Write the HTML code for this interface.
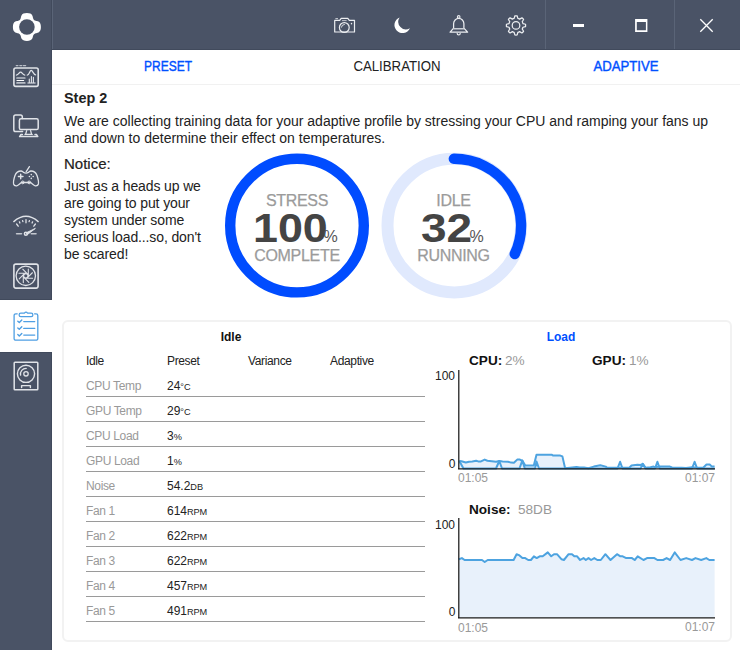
<!DOCTYPE html>
<html><head><meta charset="utf-8">
<style>
*{margin:0;padding:0;box-sizing:border-box}
html,body{width:740px;height:650px;overflow:hidden;background:#fff}
body{position:relative;font-family:"Liberation Sans",sans-serif;color:#222}
.a{position:absolute;white-space:nowrap}
#side{position:absolute;left:0;top:0;width:52px;height:650px;background:#4a5366;border-right:1px solid #414a5c}
#top{position:absolute;left:52px;top:0;width:688px;height:50px;background:#4a5366;border-bottom:1px solid #414a5c}
.sep{position:absolute;top:0;width:1px;height:49px;background:#5a6477}
#act{position:absolute;left:0;top:299px;width:52px;height:54px;background:#fff;border-top:1px solid #414a5c;border-bottom:1px solid #414a5c}
.tab{position:absolute;top:57px;font-size:14px;line-height:18px;white-space:nowrap}
.rt{width:140px;text-align:center;font-size:16px;letter-spacing:-0.3px;line-height:20px;color:#9b9b9b;-webkit-text-stroke:0.25px #9b9b9b}
.rn{font-size:40px;line-height:40px;font-weight:bold;color:#444}
.tb{font-size:12px;line-height:16px;font-weight:bold;color:#111}
.td{font-size:12px;line-height:16px;color:#222;letter-spacing:-0.35px}
.u{font-size:9.2px;letter-spacing:-0.1px}
.ch{font-size:13.6px;line-height:18px;color:#111}
.ax{font-size:12px;line-height:16px;color:#222}
.pc{font-size:16px;font-weight:normal;color:#555;letter-spacing:0}
.g{color:#999}
.blue{color:#0050ff}
</style></head><body>
<div id="side"></div>
<div id="top"></div>
<div id="act"></div>
<div class="sep" style="left:52px"></div>
<div class="sep" style="left:545px"></div>
<div class="sep" style="left:674px"></div>

<!-- tabs -->
<div class="tab blue" style="left:168.2px;transform:translateX(-50%) scaleX(0.855);-webkit-text-stroke:0.4px #0050ff">PRESET</div>
<div class="tab" style="left:397px;transform:translateX(-50%) scaleX(0.945)">CALIBRATION</div>
<div class="tab blue" style="left:626px;transform:translateX(-50%) scaleX(0.94);-webkit-text-stroke:0.4px #0050ff">ADAPTIVE</div>
<div class="a" style="left:52px;top:84px;width:688px;height:1px;background:#f1f1f1"></div>

<div class="a" style="left:64px;top:88.7px;font-size:14.4px;font-weight:bold;line-height:18px">Step 2</div>
<div class="a" style="left:64px;top:112.5px;font-size:14px;line-height:17px;white-space:normal;width:660px">We are collecting training data for your adaptive profile by stressing your CPU and ramping your fans up and down to determine their effect on temperatures.</div>
<div class="a" style="left:64px;top:155px;font-size:15px;line-height:18px;-webkit-text-stroke:0.2px #222">Notice:</div>
<div class="a" style="left:64px;top:178px;font-size:14px;line-height:17px;letter-spacing:-0.12px;white-space:normal;width:150px">Just as a heads up we<br>are going to put your<br>system under some<br>serious load...so, don't<br>be scared!</div>


<svg class="a" style="left:0;top:0" width="740" height="650">
<circle cx="297" cy="225.6" r="66.8" fill="none" stroke="#004cff" stroke-width="10.4"/>
<circle cx="454.3" cy="225.6" r="66.8" fill="none" stroke="#e0e9fd" stroke-width="12"/>
<path d="M453.8 158.8 A66.8 66.8 0 0 1 514.74 254.04" fill="none" stroke="#004cff" stroke-width="10.4" stroke-linecap="round"/>
</svg>
<div class="a rt" style="left:227px;top:190.6px">STRESS</div>
<div class="a rn" style="left:253px;top:208px;letter-spacing:0;transform:scaleX(1.12);transform-origin:0 0">100</div><div class="a pc" style="left:323.5px;top:227px;line-height:20px">%</div>
<div class="a rt" style="left:227px;top:246.4px">COMPLETE</div>
<div class="a rt" style="left:383.5px;top:190.6px">IDLE</div>
<div class="a rn" style="left:421px;top:208px;letter-spacing:0;transform:scaleX(1.15);transform-origin:0 0">32</div><div class="a pc" style="left:469.5px;top:227px;line-height:20px">%</div>
<div class="a rt" style="left:383.5px;top:246.4px">RUNNING</div>

<div class="a" style="left:62px;top:320px;width:670px;height:322px;border:2px solid #f2f2f2;border-radius:6px"></div>
<div class="a tb" style="left:191px;top:329px;width:80px;text-align:center">Idle</div>
<div class="a tb blue" style="left:521px;top:329px;width:80px;text-align:center">Load</div>
<div class="a td" style="left:86px;top:353px">Idle</div>
<div class="a td" style="left:167px;top:353px">Preset</div>
<div class="a td" style="left:248px;top:353px">Variance</div>
<div class="a td" style="left:330px;top:353px">Adaptive</div>
<div class="a td g" style="left:86px;top:378px">CPU Temp</div>
<div class="a td" style="left:167px;top:378px;font-size:12px;letter-spacing:0">24<span class="u" style="letter-spacing:-0.1px">°C</span></div>
<div class="a" style="left:86px;top:396px;width:339px;height:1px;background:#9a9a9a"></div>
<div class="a td g" style="left:86px;top:403px">GPU Temp</div>
<div class="a td" style="left:167px;top:403px;font-size:12px;letter-spacing:0">29<span class="u" style="letter-spacing:-0.1px">°C</span></div>
<div class="a" style="left:86px;top:421px;width:339px;height:1px;background:#9a9a9a"></div>
<div class="a td g" style="left:86px;top:428px">CPU Load</div>
<div class="a td" style="left:167px;top:428px;font-size:12px;letter-spacing:0">3<span class="u" style="letter-spacing:-0.1px">%</span></div>
<div class="a" style="left:86px;top:446px;width:339px;height:1px;background:#9a9a9a"></div>
<div class="a td g" style="left:86px;top:453px">GPU Load</div>
<div class="a td" style="left:167px;top:453px;font-size:12px;letter-spacing:0">1<span class="u" style="letter-spacing:-0.1px">%</span></div>
<div class="a" style="left:86px;top:471px;width:339px;height:1px;background:#9a9a9a"></div>
<div class="a td g" style="left:86px;top:478px">Noise</div>
<div class="a td" style="left:167px;top:478px;font-size:12px;letter-spacing:0">54.2<span class="u" style="letter-spacing:-0.1px">DB</span></div>
<div class="a" style="left:86px;top:496px;width:339px;height:1px;background:#9a9a9a"></div>
<div class="a td g" style="left:86px;top:503px">Fan 1</div>
<div class="a td" style="left:167px;top:503px;font-size:12px;letter-spacing:0">614<span class="u" style="letter-spacing:-0.1px">RPM</span></div>
<div class="a" style="left:86px;top:521px;width:339px;height:1px;background:#9a9a9a"></div>
<div class="a td g" style="left:86px;top:528px">Fan 2</div>
<div class="a td" style="left:167px;top:528px;font-size:12px;letter-spacing:0">622<span class="u" style="letter-spacing:-0.1px">RPM</span></div>
<div class="a" style="left:86px;top:546px;width:339px;height:1px;background:#9a9a9a"></div>
<div class="a td g" style="left:86px;top:553px">Fan 3</div>
<div class="a td" style="left:167px;top:553px;font-size:12px;letter-spacing:0">622<span class="u" style="letter-spacing:-0.1px">RPM</span></div>
<div class="a" style="left:86px;top:571px;width:339px;height:1px;background:#9a9a9a"></div>
<div class="a td g" style="left:86px;top:578px">Fan 4</div>
<div class="a td" style="left:167px;top:578px;font-size:12px;letter-spacing:0">457<span class="u" style="letter-spacing:-0.1px">RPM</span></div>
<div class="a" style="left:86px;top:596px;width:339px;height:1px;background:#9a9a9a"></div>
<div class="a td g" style="left:86px;top:603px">Fan 5</div>
<div class="a td" style="left:167px;top:603px;font-size:12px;letter-spacing:0">491<span class="u" style="letter-spacing:-0.1px">RPM</span></div>
<div class="a" style="left:86px;top:621px;width:339px;height:1px;background:#9a9a9a"></div>

<svg class="a" style="left:0;top:0" width="740" height="650">
<polygon points="459.3,461.0 461.5,461.2 465.8,462.5 469.0,461.8 472.3,461.4 476.1,460.7 478.2,461.4 481.0,461.4 484.7,459.6 487.4,460.7 491.8,461.2 496.1,461.8 499.3,461.0 502.6,461.4 508.0,461.8 511.2,462.6 513.9,462.8 517.2,459.6 519.9,459.6 522.6,461.0 525.3,465.5 533.8,465.5 536.5,454.7 551.6,454.7 553.2,455.6 560.3,455.6 562.4,456.4 565.1,468.2 570.0,467.7 576.5,467.0 579.7,467.5 584.0,467.5 588.4,468.2 593.8,466.6 600.3,465.3 605.7,466.6 607.2,467.7 618.0,467.7 622.3,467.7 629.3,467.7 631.5,465.5 637.4,464.7 640.7,465.0 642.8,463.9 645.5,467.7 650.4,467.2 653.6,466.6 655.3,467.2 659.6,466.6 669.9,466.6 672.0,467.5 681.6,467.7 686.0,468.0 692.4,467.2 697.3,467.7 703.2,467.7 706.5,464.5 709.7,464.5 711.9,466.6 714.6,466.6 714.6,468.5 459.3,468.5" fill="#e8f1fb"/>
<polyline points="459.3,461.0 461.5,461.2 465.8,462.5 469.0,461.8 472.3,461.4 476.1,460.7 478.2,461.4 481.0,461.4 484.7,459.6 487.4,460.7 491.8,461.2 496.1,461.8 499.3,461.0 502.6,461.4 508.0,461.8 511.2,462.6 513.9,462.8 517.2,459.6 519.9,459.6 522.6,461.0 525.3,465.5 533.8,465.5 536.5,454.7 551.6,454.7 553.2,455.6 560.3,455.6 562.4,456.4 565.1,468.2 570.0,467.7 576.5,467.0 579.7,467.5 584.0,467.5 588.4,468.2 593.8,466.6 600.3,465.3 605.7,466.6 607.2,467.7 618.0,467.7 622.3,467.7 629.3,467.7 631.5,465.5 637.4,464.7 640.7,465.0 642.8,463.9 645.5,467.7 650.4,467.2 653.6,466.6 655.3,467.2 659.6,466.6 669.9,466.6 672.0,467.5 681.6,467.7 686.0,468.0 692.4,467.2 697.3,467.7 703.2,467.7 706.5,464.5 709.7,464.5 711.9,466.6 714.6,466.6" fill="none" stroke="#4da3e0" stroke-width="2" stroke-linejoin="round"/>
<polyline points="459.3,461.0 463.5,468.5 496.0,468.5 499.3,461.0 502.0,468.5 519.5,468.5 522.3,460.5 524.8,468.5 535.0,468.5 536.5,461.5 539.0,468.5 617.5,468.5 620.1,461.8 622.5,468.5 640.5,468.5 642.8,463.9 645.5,468.5 655.0,468.5 657.4,461.8 659.8,468.5 692.0,468.5 694.6,461.8 697.2,468.5 714.6,468.5" fill="none" stroke="#4da3e0" stroke-width="2" stroke-linejoin="round"/>
<polygon points="458.9,559.3 461.9,558.1 464.6,560.0 482.0,560.0 484.7,562.0 487.7,560.0 513.6,560.0 516.6,554.2 518.9,555.1 522.4,558.1 525.2,558.1 528.2,560.0 530.9,560.0 533.9,556.3 536.7,558.1 539.7,556.3 542.7,556.3 547.8,552.4 551.2,556.3 554.0,554.2 557.0,554.2 561.6,559.3 563.9,560.0 568.6,554.2 572.0,554.2 574.3,556.3 577.1,556.3 580.1,560.0 583.5,558.1 585.8,560.0 588.5,558.1 591.1,560.0 594.3,558.1 597.3,560.0 600.8,560.0 605.4,554.2 610.5,560.0 617.0,554.2 620.4,556.3 622.7,556.3 626.2,558.1 632.0,558.1 634.7,560.0 637.7,556.3 643.5,560.0 647.0,558.1 654.4,558.1 657.4,560.0 663.1,560.0 666.6,558.1 670.1,560.0 674.7,552.4 680.5,560.0 686.2,558.1 692.0,560.0 695.5,558.1 701.2,560.0 706.3,558.1 709.3,560.0 714.6,560.0 714.6,617.5 458.9,617.5" fill="#e8f1fb"/>
<polyline points="458.9,559.3 461.9,558.1 464.6,560.0 482.0,560.0 484.7,562.0 487.7,560.0 513.6,560.0 516.6,554.2 518.9,555.1 522.4,558.1 525.2,558.1 528.2,560.0 530.9,560.0 533.9,556.3 536.7,558.1 539.7,556.3 542.7,556.3 547.8,552.4 551.2,556.3 554.0,554.2 557.0,554.2 561.6,559.3 563.9,560.0 568.6,554.2 572.0,554.2 574.3,556.3 577.1,556.3 580.1,560.0 583.5,558.1 585.8,560.0 588.5,558.1 591.1,560.0 594.3,558.1 597.3,560.0 600.8,560.0 605.4,554.2 610.5,560.0 617.0,554.2 620.4,556.3 622.7,556.3 626.2,558.1 632.0,558.1 634.7,560.0 637.7,556.3 643.5,560.0 647.0,558.1 654.4,558.1 657.4,560.0 663.1,560.0 666.6,558.1 670.1,560.0 674.7,552.4 680.5,560.0 686.2,558.1 692.0,560.0 695.5,558.1 701.2,560.0 706.3,558.1 709.3,560.0 714.6,560.0" fill="none" stroke="#4da3e0" stroke-width="2" stroke-linejoin="round"/>
<path d="M458.8 370V469M458 468.8H715" stroke="#1a1a1a" stroke-width="1.25" fill="none"/>
<path d="M458.8 518V618M458 617.8H715" stroke="#1a1a1a" stroke-width="1.25" fill="none"/>
</svg>

<div class="a ch" style="left:469px;top:352px"><b>CPU:</b></div><div class="a ch g" style="left:505px;top:352px">2%</div>
<div class="a ch" style="left:592px;top:352px"><b>GPU:</b></div><div class="a ch g" style="left:629px;top:352px">1%</div>
<div class="a ch" style="left:469px;top:501px"><b>Noise:</b></div><div class="a ch g" style="left:518px;top:501px">58DB</div>
<div class="a ax" style="left:400px;top:368px;width:55px;text-align:right">100</div>
<div class="a ax" style="left:400px;top:455.5px;width:55.5px;text-align:right">0</div>
<div class="a ax g" style="left:458px;top:470px">01:05</div>
<div class="a ax g" style="left:600px;top:470px;width:115px;text-align:right">01:07</div>
<div class="a ax" style="left:400px;top:517px;width:55px;text-align:right">100</div>
<div class="a ax" style="left:400px;top:604px;width:55.5px;text-align:right">0</div>
<div class="a ax g" style="left:458px;top:619.5px">01:05</div>
<div class="a ax g" style="left:600px;top:619px;width:115px;text-align:right">01:07</div>

<svg class="a" style="left:0;top:0" width="740" height="650">
<path d="M26.90 13.00C29.70 13.00 31.50 13.80 32.30 15.40C32.80 16.50 32.90 17.60 33.10 18.20C33.50 19.60 34.30 20.40 35.70 20.80C36.30 21.00 37.40 21.10 38.50 21.60C40.10 22.40 40.90 24.20 40.90 27.00C40.90 29.80 40.10 31.60 38.50 32.40C37.40 32.90 36.30 33.00 35.70 33.20C34.30 33.60 33.50 34.40 33.10 35.80C32.90 36.40 32.80 37.50 32.30 38.60C31.50 40.20 29.70 41.00 26.90 41.00C24.10 41.00 22.30 40.20 21.50 38.60C21.00 37.50 20.90 36.40 20.70 35.80C20.30 34.40 19.50 33.60 18.10 33.20C17.50 33.00 16.40 32.90 15.30 32.40C13.70 31.60 12.90 29.80 12.90 27.00C12.90 24.20 13.70 22.40 15.30 21.60C16.40 21.10 17.50 21.00 18.10 20.80C19.50 20.40 20.30 19.60 20.70 18.20C20.90 17.60 21.00 16.50 21.50 15.40C22.30 13.80 24.10 13.00 26.90 13.00Z" fill="#fff"/>
<circle cx="26.9" cy="27" r="7.8" fill="#4a5366"/>
<g fill="none" stroke="#e0e3e8" stroke-width="1.5" stroke-linecap="round" stroke-linejoin="round">
<!-- dashboard -->
<rect x="13.9" y="68" width="24.3" height="18.4" rx="1.8" stroke-width="1.6"/>
<path d="M16.3 65.6h1.6M19.9 65.6h1.8M23.4 65.6h2.2" stroke-width="1.4" stroke="#b9bec7"/>
<path d="M16.4 75C18.6 75 19 72.2 20.6 72.2C22.2 72.2 22.6 75 24.8 75M27.2 75C29.4 75 29.6 70.4 31.2 70.4C32.8 70.4 33.4 74.8 35.6 74.8" stroke-width="1.25"/>
<path d="M17 78h7.8M17 82.9h7.8" stroke-width="1.7" stroke="#b9bec7"/>
<path d="M17 80.5h6.6" stroke-width="1.2" stroke="#fff"/>
<path d="M28 82.9h7" stroke-width="1.5" stroke="#b9bec7"/>
<path d="M29.3 82.4v-3.3M31.4 82.4v-5.8M33.4 82.4v-5" stroke-width="1.1"/>
<!-- computer -->
<path d="M22.3 118.4V116.8a1.8 1.8 0 0 0-1.8-1.8H15.6a1.8 1.8 0 0 0-1.8 1.8V129.8a1.8 1.8 0 0 0 1.8 1.8H22.6"/>
<rect x="19.4" y="118.8" width="18.8" height="10.8" rx="1.6"/>
<path d="M26.7 130.6L25.6 134.3M30.6 130.6L31.6 134.3M24.9 134.3H32.3" stroke-width="1.3"/>
<path d="M22.4 134.4H21L19.6 136.6H37.8L36.4 134.4H35" stroke-width="1.5"/>
<!-- gamepad -->
<path d="M26.2 171.6L29.4 166.6" stroke-width="1.3"/>
<path d="M21.1 171C22.3 171 22.8 172 23.4 172.3C24.4 173 25 173.1 26 173.1C27 173.1 27.6 173 28.6 172.3C29.2 172 29.7 171 30.9 171C33.5 171 35.8 172.2 37 175.5C38.2 179 38.8 182 38.4 184C38 185.5 36.6 186 35.2 185.8C33.8 185.5 32.2 183.6 30.5 182.5H21.5C19.8 183.6 18.2 185.5 16.8 185.8C15.4 186 14 185.5 13.6 184C13.2 182 13.8 179 15 175.5C16.2 172.2 18.5 171 21.1 171Z" stroke-width="1.3"/>
<path d="M20.7 174.2V178.8M18.4 176.5H23" stroke-width="1.4"/>
<circle cx="22.8" cy="182.4" r="1.4" stroke-width="1"/><circle cx="29.2" cy="182.4" r="1.4" stroke-width="1"/>
<!-- gauge -->
<path d="M13.8 221.6Q26 211 38.2 221.6" stroke-width="1.4"/>
<path d="M16.6 224L18.2 226.2M19.4 221.8L19.9 223M22.6 220.6L22.9 221.6M26 219.6V222.8M29.4 220.6L29.1 221.6M32.6 221.8L32.1 223M35.4 224L33.8 226.2" stroke-width="1.3"/>
<path d="M16.6 233.8h4.9M31.3 233.8h4.7" stroke-width="1.6" stroke="#c4c8cf"/>
<path d="M26.6 232.6L35.4 228.4L27.6 234.4Z" stroke-width="0.9" fill="#e0e3e8"/>
<circle cx="25.9" cy="233.8" r="1.5" stroke-width="1.5"/>
<!-- fan -->
<rect x="13.9" y="264.1" width="24.2" height="24" rx="2" stroke-width="1.6"/>
<circle cx="25.8" cy="275.8" r="9.7" stroke-width="1.3"/>
<circle cx="25.8" cy="275.8" r="2.2" stroke-width="1.1"/>
<path d="M25.60 273.30L19.00 273.30M27.43 273.89L22.76 269.22M28.30 275.60L28.30 269.00M27.71 277.43L32.38 272.76M26.00 278.30L32.60 278.30M24.17 277.71L28.84 282.38M23.30 276.00L23.30 282.60M23.89 274.17L19.22 278.84" stroke-width="1.1"/>
<!-- speaker -->
<rect x="14.2" y="362.2" width="23.6" height="27.6" rx="0.8" stroke-width="1.5"/>
<circle cx="26" cy="373.8" r="8.6" stroke-width="1.4"/>
<circle cx="26" cy="373.8" r="2.2" stroke-width="1.3"/>
<path d="M20.6 375.2A5.6 5.6 0 0 1 26.2 368.4" stroke-width="1.3"/>
<path d="M21.6 387.6V385.6H30.4V387.6" stroke-width="1.4"/>
<g fill="#e0e3e8" stroke="none"><circle cx="31.3" cy="174.6" r="0.8"/><circle cx="29.4" cy="176.5" r="0.8"/><circle cx="33.2" cy="176.5" r="0.8"/><circle cx="31.3" cy="178.4" r="0.8"/></g>
</g>
<!-- clipboard active -->
<g fill="none" stroke="#4f9fe3" stroke-width="1.3" stroke-linecap="round" stroke-linejoin="round">
<path d="M17.2 313.8H15.8A1.7 1.7 0 0 0 14.1 315.5V338.5A1.7 1.7 0 0 0 15.8 340.2H36.1A1.7 1.7 0 0 0 37.8 338.5V315.5A1.7 1.7 0 0 0 36.1 313.8H34.6"/>
<path d="M20.8 313.2H24.4Q26 311.2 27.6 313.2H31.2A1.7 1.7 0 0 1 31.2 316.6H20.8A1.7 1.7 0 0 1 20.8 313.2Z" stroke-width="1.25"/>
<path d="M17.8 321.2L19.3 322.6L21.8 320M17.8 327.9L19.3 329.3L21.8 326.7M17.8 334.6L19.3 336L21.8 333.4" stroke-width="1.4"/>
<path d="M23.8 321.6H34.7M23.8 328.4H34.7M23.8 335.1H34.7" stroke-width="1.4"/>
</g>
<!-- top bar -->
<g fill="none" stroke="#eceef1" stroke-width="1.3" stroke-linecap="round" stroke-linejoin="round">
<path d="M335.4 18.6H338" stroke-width="1" stroke-linecap="butt" stroke="#c9cdd4"/>
<path d="M339.7 20.4L341.2 18.4H347.8L349.3 20.4H354.5V32H334.7V20.4Z" stroke-width="1.2"/>
<path d="M342.4 20.6H346.2" stroke-width="0.9" stroke="#c9cdd4"/>
<circle cx="344.3" cy="27.5" r="4.9" stroke-width="1.2"/>
<path d="M341.4 27.2A3.2 3.2 0 0 1 344.4 24.4" stroke-width="0.9"/>
<path d="M351.5 23.5v0.2" stroke-width="1.4"/>
<!-- bell -->
<circle cx="458.7" cy="16.9" r="1.3" stroke-width="1.1"/>
<path d="M453.6 28.2V23.8A5.1 5.3 0 0 1 463.9 23.8V28.2L467.6 32.2H450.1Z" stroke-width="1.25"/>
<path d="M453.8 28.7H463.8" stroke-width="1.4" stroke="#c9cdd4"/>
<path d="M457.2 33.4A1.5 1.5 0 0 0 460.2 33.4" stroke-width="1.2"/>
<!-- gear -->
<path d="M514.14 18.45L514.83 15.87A9.60 9.60 0 0 1 517.17 15.87L517.86 18.45A7.20 7.20 0 0 1 519.60 19.16L521.91 17.84A9.60 9.60 0 0 1 523.56 19.49L522.24 21.80A7.20 7.20 0 0 1 522.95 23.54L525.53 24.23A9.60 9.60 0 0 1 525.53 26.57L522.95 27.26A7.20 7.20 0 0 1 522.24 29.00L523.56 31.31A9.60 9.60 0 0 1 521.91 32.96L519.60 31.64A7.20 7.20 0 0 1 517.86 32.35L517.17 34.93A9.60 9.60 0 0 1 514.83 34.93L514.14 32.35A7.20 7.20 0 0 1 512.40 31.64L510.09 32.96A9.60 9.60 0 0 1 508.44 31.31L509.76 29.00A7.20 7.20 0 0 1 509.05 27.26L506.47 26.57A9.60 9.60 0 0 1 506.47 24.23L509.05 23.54A7.20 7.20 0 0 1 509.76 21.80L508.44 19.49A9.60 9.60 0 0 1 510.09 17.84L512.40 19.16A7.20 7.20 0 0 1 514.14 18.45Z" stroke-width="1.25"/>
<circle cx="516" cy="25.4" r="3.8" stroke-width="1.25"/>
</g>
<!-- moon -->
<path d="M399.6 17.4A8.1 8.1 0 1 0 409.9 28.3A7.7 7.7 0 0 1 399.6 17.4Z" fill="#fff"/>
<!-- window controls -->
<rect x="573" y="24" width="11" height="3" fill="#fff"/>
<path d="M635.1 18.9H647.4V32H635.1ZM636.8 21.9V30.3H645.9V21.9Z" fill="#fff" fill-rule="evenodd"/>
<path d="M700.3 19.3L712.7 31.7M712.7 19.3L700.3 31.7" stroke="#fff" stroke-width="1.3"/>
</svg>
</body></html>
